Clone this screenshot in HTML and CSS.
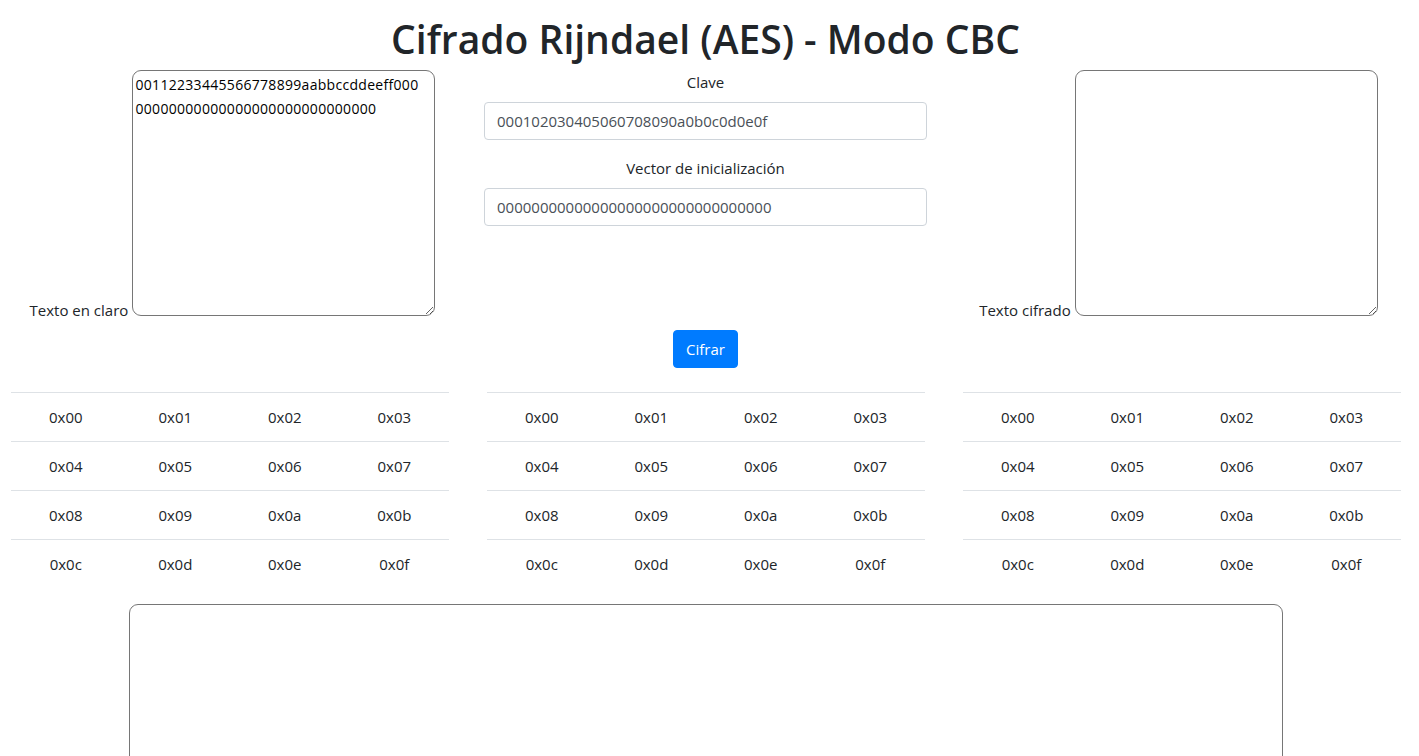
FILE: index.html
```html
<!DOCTYPE html>
<html lang="es">
<head>
<meta charset="utf-8">
<title>Cifrado Rijndael (AES) - Modo CBC</title>
<link rel="stylesheet" href="styles.css">
</head>
<body>
<h1 class="title">Cifrado Rijndael (AES) - Modo CBC</h1>
<div class="top-row">
  <div class="col col-text">
    <label class="side-label" for="plain">Texto en claro</label>
    <textarea id="plain" class="text-box">00112233445566778899aabbccddeeff00000000000000000000000000000000</textarea>
  </div>
  <div class="col col-form">
    <div class="form-group">
      <label class="field-label" for="key">Clave</label>
      <input id="key" class="form-control" type="text" value="000102030405060708090a0b0c0d0e0f">
    </div>
    <div class="form-group">
      <label class="field-label" for="iv">Vector de inicialización</label>
      <input id="iv" class="form-control" type="text" value="00000000000000000000000000000000">
    </div>
  </div>
  <div class="col col-text">
    <label class="side-label" for="cipher">Texto cifrado</label>
    <textarea id="cipher" class="text-box"></textarea>
  </div>
</div>
<div class="btn-row">
  <button class="btn-primary" type="button">Cifrar</button>
</div>
<div class="tables-row">
  <table class="state">
    <tr><td>0x00</td><td>0x01</td><td>0x02</td><td>0x03</td></tr>
    <tr><td>0x04</td><td>0x05</td><td>0x06</td><td>0x07</td></tr>
    <tr><td>0x08</td><td>0x09</td><td>0x0a</td><td>0x0b</td></tr>
    <tr><td>0x0c</td><td>0x0d</td><td>0x0e</td><td>0x0f</td></tr>
  </table>
  <table class="state">
    <tr><td>0x00</td><td>0x01</td><td>0x02</td><td>0x03</td></tr>
    <tr><td>0x04</td><td>0x05</td><td>0x06</td><td>0x07</td></tr>
    <tr><td>0x08</td><td>0x09</td><td>0x0a</td><td>0x0b</td></tr>
    <tr><td>0x0c</td><td>0x0d</td><td>0x0e</td><td>0x0f</td></tr>
  </table>
  <table class="state">
    <tr><td>0x00</td><td>0x01</td><td>0x02</td><td>0x03</td></tr>
    <tr><td>0x04</td><td>0x05</td><td>0x06</td><td>0x07</td></tr>
    <tr><td>0x08</td><td>0x09</td><td>0x0a</td><td>0x0b</td></tr>
    <tr><td>0x0c</td><td>0x0d</td><td>0x0e</td><td>0x0f</td></tr>
  </table>
</div>
<div class="log-row">
  <textarea class="log-box"></textarea>
</div>
</body>
</html>
```
FILE: styles.css
```css
html, body {
  margin: 0;
  padding: 0;
  background: #fff;
}
body {
  font-family: "Open Sans", "Noto Sans", sans-serif;
  font-size: 16px;
  line-height: 1.5;
  color: #212529;
  overflow: hidden;
}
.title {
  margin: 15px 0 8px;
  padding-right: 8px;
  font-size: 39px;
  font-weight: 600;
  line-height: 47px;
  text-align: center;
  color: #212529;
}
.top-row {
  display: grid;
  grid-template-columns: 473px 473px 473px;
  margin-left: -4px;
}
.col {
  padding: 0 15px;
  text-align: center;
}
.side-label {
  font-size: 15px;
}
.text-box {
  width: 303px;
  height: 246px;
  box-sizing: border-box;
  margin: 0;
  padding: 2px 10px 2px 2px;
  border: 1px solid #767676;
  border-radius: 9px;
  font-family: "Open Sans", sans-serif;
  font-size: 14px;
  letter-spacing: 0.3px;
  line-height: 24px;
  color: #000;
  resize: vertical;
  vertical-align: baseline;
  overflow: hidden;
}
.form-group {
  margin-bottom: 16px;
}
.field-label {
  display: block;
  margin-bottom: 8px;
  font-size: 15px;
  line-height: 24px;
}
.form-control {
  display: block;
  width: 100%;
  height: 38px;
  box-sizing: border-box;
  margin: 0;
  padding: 6px 12px;
  border: 1px solid #ced4da;
  border-radius: 4px;
  font-family: inherit;
  font-size: 15px;
  line-height: 24px;
  color: #495057;
  background: #fff;
}
.btn-row {
  display: flex;
  justify-content: center;
  margin-top: 8px;
  margin-bottom: 24px;
  padding-right: 8px;
}
.btn-primary {
  height: 38px;
  padding: 0 12px;
  border: 1px solid #007bff;
  border-radius: 4px;
  background: #007bff;
  color: #fff;
  font-family: inherit;
  font-size: 15px;
  line-height: 24px;
}
.tables-row {
  display: grid;
  grid-template-columns: 438px 438px 438px;
  column-gap: 38px;
  padding-left: 11px;
}
.state {
  width: 100%;
  border-collapse: collapse;
  table-layout: fixed;
}
.state td {
  padding: 12px 0;
  border-top: 1px solid #dee2e6;
  text-align: center;
  font-size: 15px;
  line-height: 24px;
}
.log-row {
  display: flex;
  justify-content: center;
  padding-top: 16px;
  margin-left: -8px;
}
.log-box {
  width: 1154px;
  height: 300px;
  box-sizing: border-box;
  margin: 0;
  border: 1px solid #767676;
  border-radius: 9px;
}
```
